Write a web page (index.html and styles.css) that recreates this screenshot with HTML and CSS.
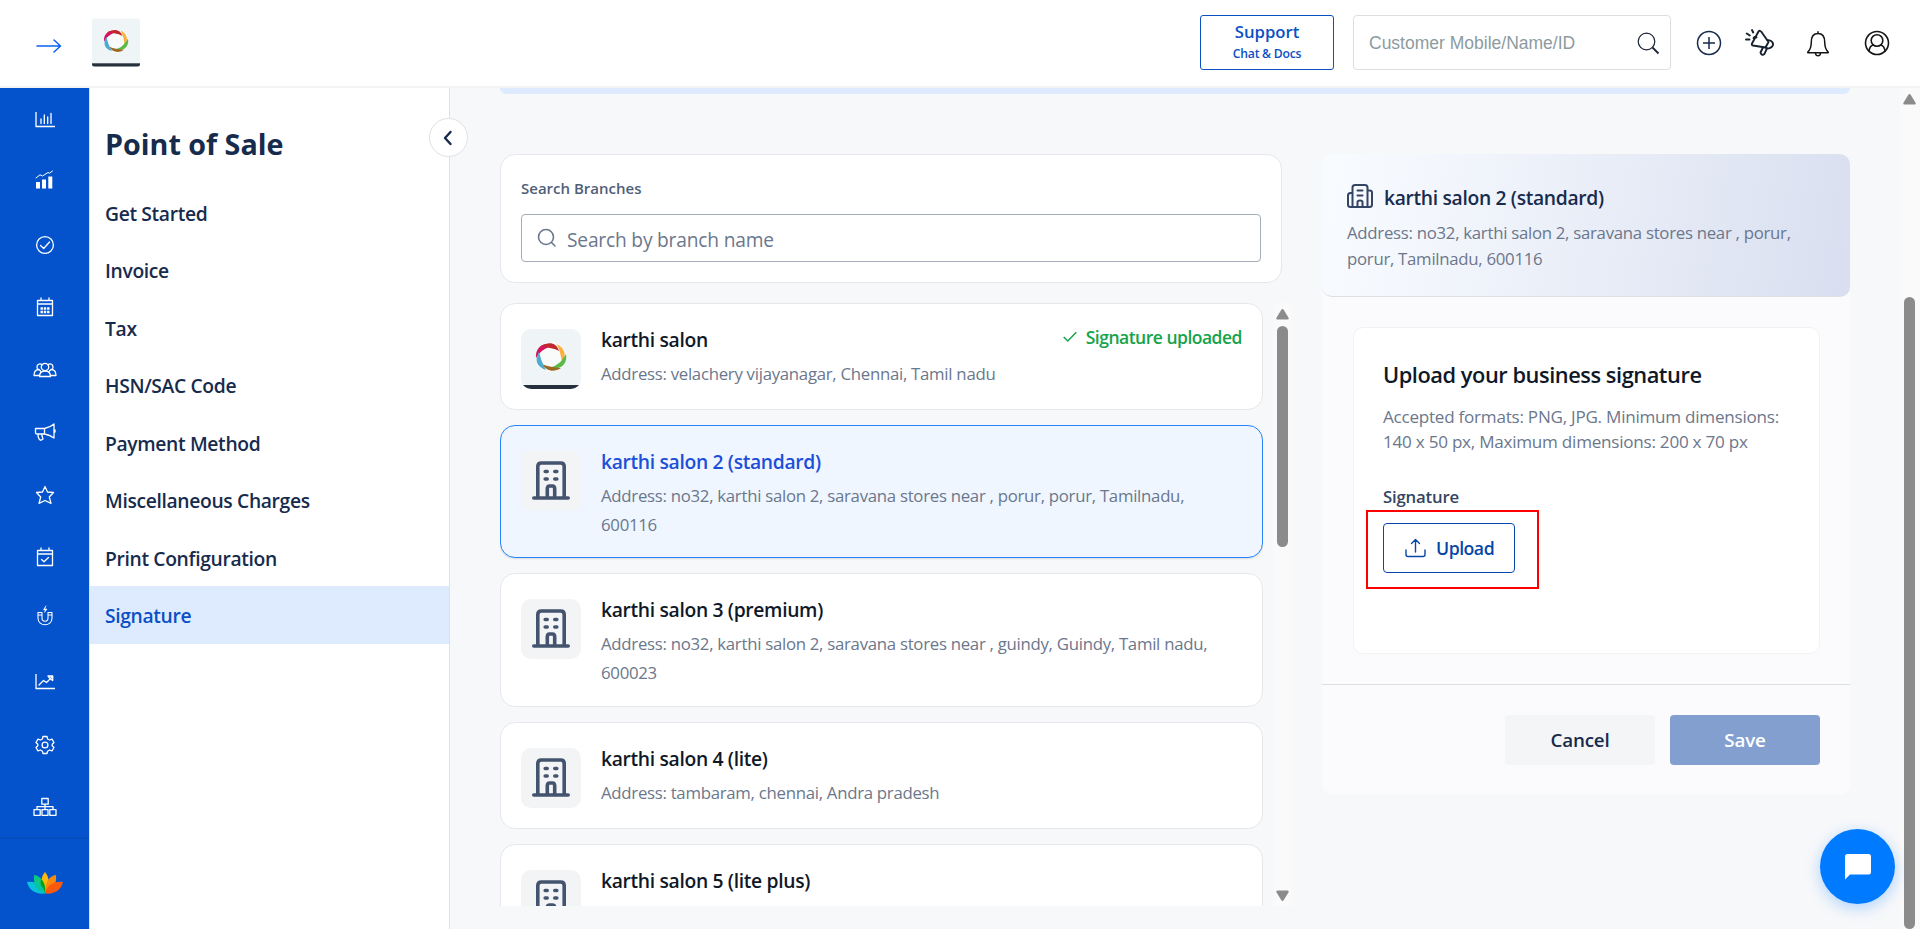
FILE: index.html
```html
<!DOCTYPE html>
<html lang="en">
<head>
<meta charset="utf-8">
<title>Signature</title>
<link rel="stylesheet" href="styles.css">
</head>
<body>
<svg class="defs" width="0" height="0" aria-hidden="true">
  <symbol id="ring" viewBox="0 0 60 60">
    <rect width="60" height="60" fill="#eff4f6"/>
    <rect y="56" width="60" height="4" fill="#262f3c"/>
    <circle cx="30" cy="28" r="15" fill="#f9fbfb"/>
    <path d="M15 29C14 19 22 12 32 17C26 18 20 21 15 29Z" fill="#d4145f"/>
    <path d="M20 17C28 12 36 14 38 22C33 19 28 19 20 17Z" fill="#c1272d"/>
    <path d="M36 15C44 19 46 27 41 34C40 27 39 22 36 15Z" fill="#fbb03b"/>
    <path d="M45 25C47 35 39 42 31 38C37 36 41 32 45 25Z" fill="#5cb947"/>
    <path d="M40 39C33 44 25 42 21 35C27 38 33 38 40 39Z" fill="#9b6a23"/>
    <path d="M25 41C16 38 13 31 18 23C20 30 21 34 25 41Z" fill="#4eaad0"/>
  </symbol>
  <symbol id="building" viewBox="0 0 40 40">
    <g fill="none" stroke="#44546f" stroke-width="3.6" stroke-linecap="round" stroke-linejoin="round">
      <path d="M2.8 38H37.2M6.8 38V6.5Q6.800 3 10.300 3H29.700Q33.200 3 33.200 6.500V38"/>
      <path d="M16.300 37.500V29Q16.300 26 18.500 26H21.500Q23.700 26 23.700 29V37.500M14.200 11.500H16.200M23.800 11.500H25.800M14.200 19H16.200M23.800 19H25.800"/>
    </g>
  </symbol>
</svg>

<header class="topbar">
  <svg class="arrow" width="26" height="14" viewBox="0 0 26 14" fill="none" stroke="#0a62f5" stroke-width="1.500" stroke-linecap="round" stroke-linejoin="round"><path d="M1 7H24M18 1L24.500 7L18 13"/></svg>
  <svg class="brand" width="48" height="49" preserveAspectRatio="none"><use href="#ring"/></svg>
  <div class="support"><b>Support</b><span>Chat &amp; Docs</span></div>
  <div class="find"><span>Customer Mobile/Name/ID</span>
    <svg width="24" height="24" viewBox="0 0 24 24" fill="none" stroke="#1c2434" stroke-width="1.200"><circle cx="10.500" cy="10.500" r="8.300"/><path d="M16.500 16.500L22.500 22.500" stroke-width="1.800"/></svg>
  </div>
  <div class="tools">
    <svg width="28" height="28" viewBox="0 0 28 28" fill="none" stroke="#172b4d" stroke-width="1.500"><circle cx="14" cy="14" r="11.500"/><path d="M14 8V20M8 14H20"/></svg>
    <svg width="30" height="28" viewBox="0 0 30 28" fill="none" stroke="#16202f" stroke-width="1.900" stroke-linejoin="round" stroke-linecap="round"><path d="M13.500 2.500Q15 1 16.300 2.800L23.500 13L20.500 18.500L8 16.500Q6.300 16 7 14.500ZM8.500 9Q10.500 6.500 11.500 8.500"/><path d="M22.500 11.200C27 10.500 29.500 15 27 17.700C25.500 19.500 22.500 20 20.500 18.500M18 18.500L15.500 23.500Q16.500 26.800 19.300 25.200L22 19.500"/><path d="M7 1L8.200 3.500M1.800 4.500L4.800 6.500M1 10.500H4.500"/></svg>
    <svg width="26" height="28" viewBox="0 0 26 28" fill="none" stroke="#151515" stroke-width="1.500" stroke-linejoin="round"><path d="M13 3.500C8 3.500 6.300 7.500 6.300 12C6.300 17.500 5 20 2.800 22V22.800H23.200V22C21 20 19.700 17.500 19.700 12C19.700 7.500 18 3.500 13 3.500ZM13 3.500V1.200M10.500 23.500C11 26.500 15 26.500 15.500 23.500"/></svg>
    <svg width="26" height="26" viewBox="0 0 26 26" fill="none" stroke="#151515" stroke-width="1.600"><circle cx="13" cy="13" r="11.500"/><circle cx="13" cy="10.500" r="5.800"/><path d="M5 21.500C5.300 17.500 7 15.500 9.500 15M21 21.500C20.700 17.500 19 15.500 16.500 15"/></svg>
  </div>
</header>

<div class="body">
  <nav class="rail">
    <div class="rail-items">
      <svg class="ic a1" width="20" height="16" viewBox="0 0 20 16"><path d="M1 0V14.500H19.500M6 7V11.500M9.300 3V11.500M12.700 5V11.500M16 1.500V11.500"/></svg>
      <svg class="ic a2" width="20" height="20" viewBox="0 0 20 20"><path d="M1 8L5 4.800L7.500 6L13 2.500L14.500 3.200L17.500 1" stroke-width="1"/><path d="M3 12V18.500M9 9.500V18.500M15.300 6.500V18.500" stroke-width="4" stroke-linecap="butt"/></svg>
      <svg class="ic a3" width="20" height="20" viewBox="0 0 20 20"><circle cx="10" cy="10" r="8.400"/><path d="M5.500 10.500L8.700 13.500L14.500 7"/></svg>
      <svg class="ic a4" width="20" height="20" viewBox="0 0 20 20"><path d="M2.500 3.500H17.500V18.500H2.500ZM2.500 7H17.500M6 1V3.500M14 1V3.500"/><path d="M5.500 11.500H14.500M5.500 15H14.500" stroke-width="2.600" stroke-dasharray="2.400 .9" stroke-linecap="butt"/></svg>
      <svg class="ic a5" width="24" height="16" viewBox="0 0 24 16"><circle cx="12" cy="5" r="3.700"/><path d="M9 3C7.500 1 4 1.800 4 5Q4 6.500 5 7.500M15 3C16.500 1 20 1.800 20 5Q20 6.500 19 7.500M6.500 14.500C6.500 11 8 9 12 9S17.500 11 17.500 14.500ZM6.500 13.500H1C1 9.500 2.500 7.500 6 7.500L7.500 9M17.500 13.500H23C23 9.500 21.500 7.500 18 7.500L16.500 9"/></svg>
      <svg class="ic a6" width="22" height="20" viewBox="0 0 22 20"><path d="M1.500 6.500H10.500V12H3Q1.500 12 1.500 10.500ZM10.500 6.500Q16 5.500 20 2V16Q16 13 10.500 12M4 12Q4 17.500 7 18.300L9 17L7.500 12M21 8V10"/></svg>
      <svg class="ic a7" width="20" height="20" viewBox="0 0 20 20"><path d="M10 1.500L12.500 7L18.500 7.500L14.300 12L16 18.300L10 15.500L4 18.300L5.700 12L1.500 7.500L7.500 7Z"/></svg>
      <svg class="ic a8" width="20" height="20" viewBox="0 0 20 20"><path d="M2.500 3.500H17.500V18.500H2.500ZM2.500 7H17.500M6 1V3.500M14 1V3.500M6.500 12.500L9 14.700L13.500 10.500"/></svg>
      <svg class="ic a9" width="18" height="22" viewBox="0 0 18 22"><path d="M2 7.500H6V13C6 17.300 12 17.300 12 13V7.500H16V13C16 22 2 22 2 13ZM2 10H6M12 10H16" stroke-width="1.100"/><path d="M9.800 1L7.500 5H9.500L8.500 7.500L11 4H9Z" fill="#fff" stroke-width=".5"/></svg>
      <svg class="ic a10" width="20" height="16" viewBox="0 0 20 16"><path d="M1 0V14.500H19.500M4 11L8.500 6.500L11.500 8.500L17 3M13 2H17.700V6.500L15.500 5Z"/></svg>
      <svg class="ic a11" width="20" height="20" viewBox="0 0 20 20"><circle cx="10" cy="10" r="2.900"/><path d="M8 1.500H12L12.600 4L14.500 5L17 4.200L19 7.500L17.200 9.300V10.700L19 12.500L17 15.800L14.500 15L12.600 16.200L12 18.500H8L7.400 16.200L5.500 15L3 15.800L1 12.500L2.800 10.700V9.300L1 7.500L3 4.200L5.500 5L7.400 4Z"/></svg>
      <svg class="ic a12" width="24" height="20" viewBox="0 0 24 20"><path d="M8.800 1.500H15.200V7.200H8.800ZM12 7.200V12.700M4 12.700V9.700H20V12.700M1 12.700H7.200V18.300H1ZM9 12.700H15V18.300H9ZM16.800 12.700H23V18.300H16.800Z"/></svg>
    </div>
    <div class="rail-foot">
      <svg width="36" height="22" viewBox="0 0 36 22"><path d="M18 0C23 6 23 14 18 21C13 14 13 6 18 0Z" fill="#fdb90b"/><path d="M7 3C14 4 18 10 18 21C10 18 6 12 7 3Z" fill="#09c985"/><path d="M29 3C22 4 18 10 18 21C26 18 30 12 29 3Z" fill="#f88a10"/><path d="M14 7C18 11 18.500 15 18 21C14 16 13 12 14 7Z" fill="#05a20e"/><path d="M0 10C9 9 16 13 18 21.500C8 22.500 2 18 0 10Z" fill="#08c2dc"/><path d="M36 10C27 9 20 13 18 21.500C28 22.500 34 18 36 10Z" fill="#fb590c"/><path d="M6.500 10.300C12 11 16 14 18 21.500C12 20 8 16 6.500 10.300Z" fill="#06c3a6"/></svg>
    </div>
  </nav>

  <aside class="menu">
    <h1>Point of Sale</h1>
    <ul>
      <li>Get Started</li><li>Invoice</li><li>Tax</li><li>HSN/SAC Code</li><li>Payment Method</li><li>Miscellaneous Charges</li><li>Print Configuration</li><li class="on">Signature</li>
    </ul>
    <div class="collapse"><svg width="10" height="16" viewBox="0 0 10 16" fill="none" stroke="#172b4d" stroke-width="2.400" stroke-linecap="round" stroke-linejoin="round"><path d="M7.500 2L2 8L7.500 14"/></svg></div>
  </aside>

  <main class="page">
    <div class="banner"></div>
    <div class="cols">
      <section class="left">
        <div class="search">
          <label>Search Branches</label>
          <div class="input"><svg width="20" height="20" viewBox="0 0 20 20" fill="none" stroke="#6b778c" stroke-width="1.600" stroke-linecap="round"><circle cx="9" cy="9" r="7.500"/><path d="M14.500 14.500L18 18"/></svg><span>Search by branch name</span></div>
        </div>
        <div class="listwrap">
          <div class="list">
            <article class="card"><svg class="thumb"><use href="#ring"/></svg><div class="info"><h3>karthi salon</h3><p>Address: velachery vijayanagar, Chennai, Tamil nadu</p></div>
              <div class="ok"><svg width="14" height="12" viewBox="0 0 14 12" fill="none" stroke="#16a34a" stroke-width="1.500"><path d="M.7 6L4.800 10L13.300 1.200"/></svg><span>Signature uploaded</span></div></article>
            <article class="card sel tall"><div class="thumb"><svg width="40" height="42" viewBox="0 0 40 42"><use href="#building" width="40" height="40"/></svg></div><div class="info"><h3>karthi salon 2 (standard)</h3><p>Address: no32, karthi salon 2, saravana stores near , porur, porur, Tamilnadu,<br>600116</p></div></article>
            <article class="card tall"><div class="thumb"><svg width="40" height="42" viewBox="0 0 40 42"><use href="#building" width="40" height="40"/></svg></div><div class="info"><h3>karthi salon 3 (premium)</h3><p>Address: no32, karthi salon 2, saravana stores near , guindy, Guindy, Tamil nadu,<br>600023</p></div></article>
            <article class="card"><div class="thumb"><svg width="40" height="42" viewBox="0 0 40 42"><use href="#building" width="40" height="40"/></svg></div><div class="info"><h3>karthi salon 4 (lite)</h3><p>Address: tambaram, chennai, Andra pradesh</p></div></article>
            <article class="card"><div class="thumb"><svg width="40" height="42" viewBox="0 0 40 42"><use href="#building" width="40" height="40"/></svg></div><div class="info"><h3>karthi salon 5 (lite plus)</h3></div></article>
          </div>
          <div class="bar inner"><svg width="13" height="11" viewBox="0 0 13 11" fill="#8b8b8b"><path d="M6.500 0Q7.200 0 7.800 1L12.700 9Q13 10.500 11.500 10.500H1.500Q0 10.500.3 9L5.200 1Q5.800 0 6.500 0Z"/></svg><i></i><svg class="down" width="13" height="11" viewBox="0 0 13 11" fill="#8b8b8b"><path d="M6.500 0Q7.200 0 7.800 1L12.700 9Q13 10.500 11.500 10.500H1.500Q0 10.500.3 9L5.200 1Q5.800 0 6.500 0Z"/></svg></div>
        </div>
      </section>

      <section class="panel">
        <div class="phead">
          <div class="ptitle"><svg width="26" height="24" viewBox="0 0 26 24" fill="none" stroke="#344563" stroke-width="2" stroke-linecap="round" stroke-linejoin="round"><path d="M5.500 23V3.500Q5.500 1 8 1H18Q20.500 1 20.500 3.500V23M5.500 9H3.500Q1 9 1 11.500V20.500Q1 23 3.500 23H22.500Q25 23 25 20.500V8.500Q25 6.500 22.500 6.500H20.500M10.500 23V18Q10.500 16.500 13 16.500T15.500 18V23M10.500 6.500H15.500M10.500 11.500H15.500"/></svg><h2>karthi salon 2 (standard)</h2></div>
          <p>Address: no32, karthi salon 2, saravana stores near , porur,<br>porur, Tamilnadu, 600116</p>
        </div>
        <div class="pbody">
          <div class="box">
            <h2>Upload your business signature</h2>
            <p>Accepted formats: PNG, JPG. Minimum dimensions:<br>140 x 50 px, Maximum dimensions: 200 x 70 px</p>
            <label>Signature</label>
            <div class="upload"><svg width="21" height="20" viewBox="0 0 21 20" fill="none" stroke="#0747a6" stroke-width="1.400" stroke-linecap="round" stroke-linejoin="round"><path d="M10.500 14V1.500M6.500 5.500L10.500 1.500L14.500 5.500M1 12V16.500Q1 18.500 3 18.500H18Q20 18.500 20 16.500V12"/></svg><span>Upload</span></div>
            <div class="mark"></div>
          </div>
        </div>
        <div class="pfoot"><div class="btn cancel"><span>Cancel</span></div><div class="btn save"><span>Save</span></div></div>
      </section>
    </div>
  </main>
  <div class="bar outer"><svg width="13" height="11" viewBox="0 0 13 11" fill="#8b8b8b"><path d="M6.500 0Q7.200 0 7.800 1L12.700 9Q13 10.500 11.500 10.500H1.500Q0 10.500.3 9L5.200 1Q5.800 0 6.500 0Z"/></svg><i></i></div>
</div>
<div class="chat"><svg width="26" height="26" viewBox="0 0 26 26" fill="#fff"><path d="M2.500 0H23.500Q26 0 26 2.500V18Q26 20.500 23.500 20.500H5L0 25.500V2.500Q0 0 2.500 0Z"/></svg></div>
</body>
</html>
```

FILE: styles.css
```css
* { box-sizing: border-box; margin: 0; padding: 0; }
body { width: 1920px; height: 929px; overflow: hidden; font-family: "Open Sans", "Noto Sans", sans-serif; color: #172b4d; background: #f7f8fa; display: flex; flex-direction: column; }
svg { display: block; flex: none; }
.defs { position: absolute; }
span, h1, h2, h3, p, li, label, b { white-space: nowrap; }

.topbar { height: 88px; flex: none; background: #fff; border-bottom: 2px solid #f3f4f5; display: flex; align-items: flex-start; }
.arrow { margin: 39px 0 0 36px; }
.brand { margin: 18px 0 0 30px; border-radius: 3px; }
.support { margin: 15px 0 0 1060px; width: 134px; height: 55px; border: 1px solid #0b50c4; border-radius: 3px; color: #0b50c4; display: flex; flex-direction: column; align-items: center; }
.support b { font-size: 16.700px; line-height: 22px; font-weight: 600; margin-top: 5px; }
.support span { font-size: 12.200px; line-height: 16px; font-weight: 600; letter-spacing: -.25px; margin-top: 3px; }
.find { margin: 15px 0 0 19px; width: 318px; height: 55px; border: 1px solid #dcdee0; border-radius: 4px; display: flex; align-items: center; justify-content: space-between; padding: 0 10px 0 15px; font: 17.500px/24px "Liberation Sans", Arial, sans-serif; color: #8c9ba0; }
.tools { display: flex; align-items: flex-start; margin: 29px 0 0 24px; }
.tools svg:nth-child(2) { margin-left: 22px; }
.tools svg:nth-child(3) { margin: 1px 0 0 30px; }
.tools svg:nth-child(4) { margin: 1px 0 0 33px; }

.body { flex: 1; display: flex; min-height: 0; }
.rail { width: 89px; background: #0453cd; display: flex; flex-direction: column; flex: none; }
.rail-items { height: 749px; display: flex; flex-direction: column; align-items: center; padding: 24px 0 0; }
.ic { fill: none; stroke: #fff; stroke-width: 1.300; stroke-linejoin: round; stroke-linecap: round; }
.a2 { margin-top: 42px; } .a3 { margin-top: 45px; } .a4 { margin-top: 42px; } .a5 { margin-top: 45px; } .a6 { margin-top: 44px; }
.a7 { margin-top: 43px; } .a8 { margin-top: 42px; } .a9 { margin-top: 38px; } .a10 { margin-top: 47px; } .a11 { margin-top: 45px; } .a12 { margin-top: 42px; }
.rail-foot { flex: 1; border-top: 2px solid #034dbd; padding: 33px 0 0 27px; }

.menu { width: 361px; flex: none; background: #fff; border-right: 1px solid #dfe1e6; border-left: 1px solid #dfe1e6; position: relative; padding-top: 36px; }
.menu h1 { font-size: 28.700px; line-height: 40px; padding-left: 15px; font-weight: 700; margin-bottom: 19.500px; }
.menu ul { list-style: none; }
.menu li { height: 57.500px; line-height: 59px; padding-left: 15px; font-size: 19.300px; font-weight: 600; letter-spacing: -.35px; }
.menu li.on { background: #deebff; color: #0b50c4; }
.collapse { position: absolute; left: 339px; top: 30px; width: 39px; height: 39px; border: 1px solid #dfe1e6; border-radius: 50%; background: #fff; display: flex; align-items: center; justify-content: center; z-index: 2; padding-right: 2px; }

.page { width: 1450px; flex: none; padding-left: 50px; }
.banner { width: 1350px; height: 6px; background: #deebff; border-radius: 0 0 9px 9px; }
.cols { margin-top: 60px; display: flex; gap: 30px; align-items: flex-start; }
.left { width: 792px; }
.search { width: 782px; height: 129px; background: #fff; border: 1px solid #e5e7eb; border-radius: 15px; padding: 22px 20px 0; }
.search label { display: block; font-size: 15px; line-height: 22px; font-weight: 600; color: #505f79; }
.input { margin-top: 15px; height: 48px; border: 1px solid #a5adba; border-radius: 4px; display: flex; align-items: center; gap: 10px; padding-left: 15px; font-size: 19.200px; letter-spacing: -.2px; color: #6b778c; }
.input span { padding-top: 2px; }
.listwrap { margin-top: 20px; height: 603px; display: flex; justify-content: space-between; }
.list { width: 763px; height: 603px; overflow: hidden; display: flex; flex-direction: column; gap: 15px; }
.card { height: 107px; flex: none; background: #fff; border: 1px solid #e5e7eb; border-radius: 15px; display: flex; padding: 25px 20px 0; position: relative; }
.card.tall { height: 134px; }
.card.sel { height: 133px; background: #eff6ff; border-color: #2684ff; box-shadow: 0 1px 2px rgba(0,0,0,.12); }
.thumb { width: 60px; height: 60px; flex: none; border-radius: 10px; background: #f3f4f6; display: flex; justify-content: center; padding-top: 9px; }
svg.thumb { padding: 0; }
.info { margin-left: 20px; }
.card h3 { font-size: 19.300px; line-height: 28px; margin-top: -3px; font-weight: 600; letter-spacing: -.33px; color: #101828; }
.card.sel h3 { color: #1d4ed8; }
.card p { font-size: 16.800px; line-height: 28.500px; letter-spacing: -.28px; margin-top: 6px; color: #6b778c; }
.ok { margin-left: auto; display: flex; gap: 9px; height: 24px; align-items: center; margin-top: -4px; color: #16a34a; font-size: 17.500px; letter-spacing: -.5px; font-weight: 600; }
.bar { background: #fafafa; width: 19px; display: flex; flex-direction: column; align-items: center; flex: none; }
.bar i { width: 11px; border-radius: 6px; background: #8b8b8b; }
.inner { padding-top: 6px; }
.inner i { height: 221px; margin-top: 6px; }
.down { transform: rotate(180deg); margin-top: 343px; }
.outer { width: 20px; padding: 6px 2px 0 0; }
.outer i { margin-top: 192px; height: 700px; }

.panel { width: 528px; height: 641px; background: #fbfbfd; border-radius: 10px; }
.phead { height: 143px; border-radius: 10px; border-bottom: 1px solid #dcdfe4; background: linear-gradient(100deg, #f8fcff 0%, #f3f6fc 22%, #d9dff0 100%); padding: 30px 25px 0; }
.ptitle { display: flex; gap: 11px; height: 28px; }
.ptitle h2 { font-size: 19.300px; line-height: 28px; font-weight: 600; letter-spacing: -.33px; }
.phead p { font-size: 16.800px; line-height: 26px; letter-spacing: -.28px; margin-top: 8px; color: #6b778c; }
.pbody { height: 388px; padding: 30px 30px 0 31px; border-bottom: 1px solid #dcdfe4; }
.box { height: 327px; border: 1px solid #f1f2f4; border-radius: 10px; background: #fff; padding: 30px 29px 0; position: relative; }
.box h2 { font-size: 21.800px; line-height: 34px; font-weight: 600; letter-spacing: -.45px; color: #101828; }
.box p { font-size: 17.100px; line-height: 25px; letter-spacing: -.25px; margin-top: 12px; color: #6b778c; }
.box label { display: block; margin-top: 31px; font-size: 16.800px; line-height: 24px; font-weight: 600; letter-spacing: -.2px; color: #344563; }
.upload { width: 132px; height: 50px; margin-top: 14px; border: 1px solid #0747a6; border-radius: 4px; display: flex; align-items: center; gap: 10px; padding-left: 21px; color: #0747a6; font-size: 17.700px; font-weight: 600; letter-spacing: -.5px; }
.mark { position: absolute; left: 12px; top: 182px; width: 173px; height: 79px; border: 2px solid #f00; }
.pfoot { display: flex; justify-content: flex-end; gap: 15px; padding: 30px 30px 0; }
.btn { width: 150px; height: 50px; border-radius: 4px; display: flex; align-items: center; justify-content: center; font-size: 18.800px; font-weight: 600; letter-spacing: -.2px; }
.cancel { background: #f4f5f7; }
.save { background: #829fd0; color: #fff; }
.chat { position: absolute; left: 1820px; top: 829px; width: 75px; height: 75px; border-radius: 50%; background: #007bff; box-shadow: 0 4px 15px rgba(0,123,255,.3); display: flex; align-items: center; justify-content: center; z-index: 5; }
```
